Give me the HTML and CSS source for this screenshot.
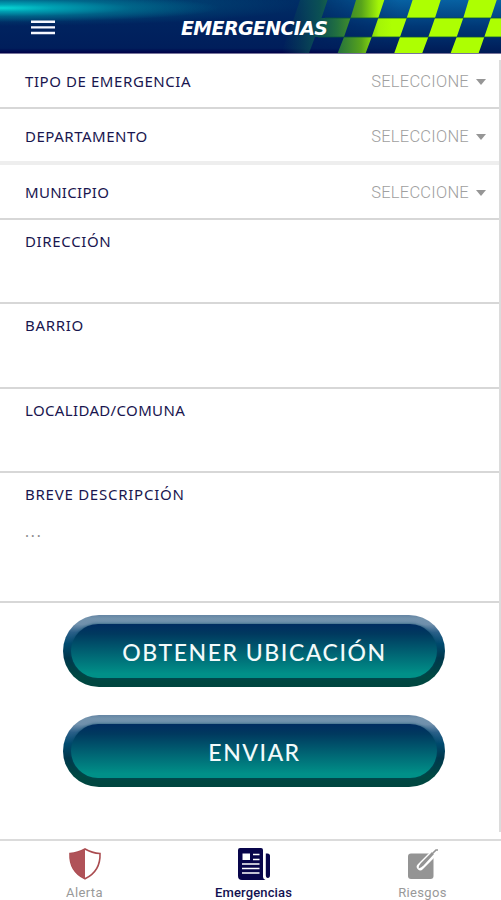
FILE: index.html
```html
<!DOCTYPE html>
<html lang="es">
<head>
<meta charset="utf-8">
<title>Emergencias</title>
<link rel="stylesheet" href="styles.css">
</head>
<body>
<div class="app">
  <header class="header">
    <svg class="checks" width="251" height="53" viewBox="0 0 251 53">
      <defs>
        <linearGradient id="lime" gradientUnits="userSpaceOnUse" x1="32" y1="0" x2="142" y2="0">
          <stop offset="0" stop-color="#084454" stop-opacity="0"/><stop offset=".34" stop-color="#0b5054"/><stop offset=".5" stop-color="#22703f"/><stop offset=".72" stop-color="#57a31b"/><stop offset=".88" stop-color="#a4f507"/><stop offset="1" stop-color="#adff02"/>
        </linearGradient>
        <linearGradient id="blue" x1="0" y1="0" x2="0" y2="1">
          <stop offset="0" stop-color="#0761a2"/><stop offset=".5" stop-color="#003876"/><stop offset="1" stop-color="#001b56"/>
        </linearGradient>
        <linearGradient id="fade" x1="0" y1="0" x2="1" y2="0">
          <stop offset=".2" stop-color="#000"/><stop offset=".6" stop-color="#fff"/>
        </linearGradient>
        <mask id="m"><rect width="251" height="53" fill="url(#fade)"/></mask>
      </defs>
      <rect width="251" height="53" fill="url(#blue)" mask="url(#m)"/>
      <g fill="url(#lime)">
        <path d="M50 0H77.500L71.500 18H44ZM106 0H134.300L128.300 18H100.500ZM162.600 0H190.700L185 18H156.700ZM218.700 0H246.700L240.700 18H213.300Z"/>
        <path d="M44 18H100.500L94 37H37ZM128.300 18H156.700L150 37H121.700ZM185 18H213.300L206.700 37H178.300ZM240.700 18H251V37H234.300Z"/>
        <path d="M37 37H65L59 53H31ZM94 37H121.700L115.700 53H87.700ZM150 37H178.300L172.300 53H144.300ZM206.700 37H234.300L228.700 53H200.700Z"/>
      </g>
      <path d="M75 18H251M68 37H251" stroke="#08543f" stroke-width=".8"/>
    </svg>
    <svg class="menu" width="24" height="15" viewBox="0 0 24 15"><path d="M0 1.800H24M0 7.400H24M0 13H24" stroke="#f5f7ff" stroke-width="2.400"/></svg>
    <h1 class="title">EMERGENCIAS</h1>
  </header>
  <main class="form">
    <div class="field select"><span class="l1">TIPO DE EMERGENCIA</span><span class="value">SELECCIONE<i class="caret"></i></span></div>
    <div class="field select thick"><span class="l2">DEPARTAMENTO</span><span class="value">SELECCIONE<i class="caret"></i></span></div>
    <div class="field select"><span class="l3">MUNICIPIO</span><span class="value">SELECCIONE<i class="caret"></i></span></div>
    <div class="field text"><span class="l4">DIRECCIÓN</span></div>
    <div class="field text mid"><span class="l5">BARRIO</span></div>
    <div class="field text"><span class="l6">LOCALIDAD/COMUNA</span></div>
    <div class="field text area"><span class="l7">BREVE DESCRIPCIÓN</span><span class="dots">...</span></div>
    <div class="actions">
      <button class="btn"><span class="face get">OBTENER UBICACIÓN</span></button>
      <button class="btn"><span class="face send">ENVIAR</span></button>
    </div>
    <div class="scroll"></div>
  </main>
  <nav class="nav">
    <div class="tab">
      <svg width="34" height="34" viewBox="0 0 34 34"><path d="M17 2Q24 6 32 6.500C32.500 19 27 27 17 31.800C7 27 1.500 19 2 6.500Q10 6 17 2Z" fill="#fff" stroke="#aa4c50" stroke-width="1.600"/><path d="M17 2V31.800C7 27 1.500 19 2 6.500Q10 6 17 2Z" fill="#b05258"/></svg>
      <span class="alert">Alerta</span>
    </div>
    <div class="tab active">
      <svg width="34" height="34" viewBox="0 0 34 34"><path d="M3 1H24Q26 1 26 3V30Q26 32 28.500 33H5Q1 33 1 29V3Q1 1 3 1Z" fill="#08054b"/><path d="M28.800 6.500H30.500Q33 6.500 33 9V28Q33 31 30.800 31Q28.800 31 28.800 28Z" fill="#08054b"/><path d="M5.500 6.500H13V13H5.500Z" fill="#fff"/><path d="M16 7.500H22.500M16 12.500H22.500M5 17H22.500M5 21.500H22.500M5 26H22.500" stroke="#fff" stroke-width="1.700"/></svg>
      <span class="emergency">Emergencias</span>
    </div>
    <div class="tab">
      <svg width="34" height="34" viewBox="0 0 34 34"><rect x="2" y="6.500" width="25.500" height="25.500" rx="3" fill="#949494"/><path d="M14.300 19.800L28 6" stroke="#fff" stroke-width="7" stroke-linecap="round" fill="none"/><path d="M12.700 21.500Q12.700 18.300 15 16L26 5L28 7L17.500 18.500Q15.500 20.700 12.700 21.500Z" fill="#949494"/><path d="M27 6L30 3H32" stroke="#949494" stroke-width="1.700" fill="none"/></svg>
      <span class="risk">Riesgos</span>
    </div>
  </nav>
</div>
</body>
</html>
```
FILE: styles.css
```css
* { box-sizing: border-box; }
body { margin: 0; background: #fff; }
.app { width: 501px; height: 900px; display: flex; flex-direction: column; overflow: hidden; }
.header {
  position: relative; height: 54px; flex: none; display: flex; align-items: center;
  border-bottom: 1px solid #78759b;
  background:
    radial-gradient(ellipse 220px 14px at 0 8px, #08d7d5 0%, rgba(0,190,200,.72) 25%, rgba(0,150,170,.38) 60%, transparent 100%),
    radial-gradient(ellipse 300px 20px at 0 6px, rgba(0,125,150,.6), transparent),
    linear-gradient(#002e66, #00235f 45%, #001e5b 91%, #000048);
}
.checks { position: absolute; right: 0; top: 0; }
.menu { margin-left: 31px; margin-top: 2px; z-index: 1; }
.title {
  margin: 3px 0 0 126px; z-index: 1; color: #fff; white-space: nowrap;
  font: italic 800 19px/24px "DejaVu Sans", "Noto Sans", sans-serif; letter-spacing: -.65px;
}
.form { position: relative; height: 785px; flex: none; color: #19164f; font: 15px/20px "Noto Sans", sans-serif; }
.field { border-bottom: 2px solid #d7d7d7; padding-left: 25px; white-space: nowrap; }
.select { height: 55px; display: flex; justify-content: space-between; align-items: center; padding-right: 15px; padding-top: 2px; }
.select.thick { height: 56px; border-bottom: 4px solid #eee; padding-top: 4px; }
.select > span:first-child { margin-top: -2px; }
.value { display: flex; align-items: center; gap: 7px; color: #a0a0a0; letter-spacing: .25px; font: 300 16.500px/20px Roboto, sans-serif; }
.caret { border: 5.500px solid transparent; border-top: 6px solid #969696; border-bottom: 0; }
.text { height: 84px; display: flex; flex-direction: column; padding-top: 11px; }
.text.mid { height: 85px; }
.text.area { height: 130px; }
.l1 { letter-spacing: .58px; }
.l2 { letter-spacing: .52px; }
.l3 { letter-spacing: .3px; }
.l4 { letter-spacing: .65px; }
.l5 { letter-spacing: .7px; }
.l6 { letter-spacing: .35px; }
.l7 { letter-spacing: .75px; }
.dots { margin-top: 17px; color: #888; letter-spacing: 1.800px; }
.actions { display: flex; flex-direction: column; align-items: center; gap: 28px; padding: 12px 0 0 7px; }
.btn {
  width: 382px; height: 72px; padding: 9px 8px; border: 0; border-radius: 36px;
  background: linear-gradient(#6585a4, #7393ad 5%, #7090ac 13%, #2b6089 24%, #004a6e 40%, #00374c 60%, #004843 85%, #00453f);
}
.face {
  display: block; height: 54px; padding: 0 0 0 1px; border-radius: 27px; color: #f2fafa;
  background: linear-gradient(#002c60, #00395f 18%, #009088 92%);
  box-shadow: 0 0 3px rgba(0,74,100,.8);
  font: 500 23px/57px Lato, sans-serif; white-space: nowrap;
}
.face.get { letter-spacing: 1.550px; }
.face.send { letter-spacing: 1.500px; }
.scroll { position: absolute; right: 0; top: 6px; width: 2px; height: 772px; background: #dcdcdc; }
.nav { height: 61px; border-top: 2px solid #dbdbdb; display: flex; padding-top: 6px; flex: none; }
.tab { width: 169px; flex: none; display: flex; flex-direction: column; align-items: center; color: #999; font: 13px/16px Roboto, sans-serif; }
.tab svg { margin-bottom: 4px; flex: none; }
.active { color: #121050; font-weight: 500; }
.alert { letter-spacing: .4px; }
.risk { letter-spacing: .35px; }
.emergency { letter-spacing: .15px; }
```
